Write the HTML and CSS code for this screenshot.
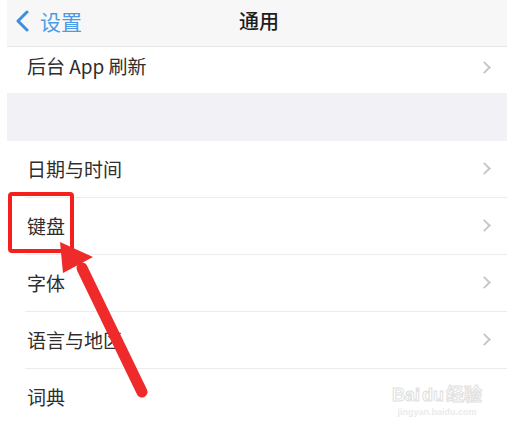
FILE: index.html
```html
<!DOCTYPE html>
<html>
<head>
  <meta charset="utf-8">
  <link rel="stylesheet" href="styles.css">
</head>
<body>
  <div class="screen">
    <div class="nav">
      <div class="back">
        <svg width="16" height="22" viewBox="0 0 16 22">
          <path d="M12 2 L3 11 L12 20" fill="none" stroke="#3d8ee0" stroke-width="3" stroke-linecap="round" stroke-linejoin="round"/>
        </svg>
        <span>设置</span>
      </div>
      <div class="title">通用</div>
    </div>

    <div class="group">
      <div class="row first">
        <span class="label">后台 App 刷新</span>
        <span class="chevron"></span>
      </div>
    </div>

    <div class="gap"></div>

    <div class="group">
      <div class="row"><span class="label">日期与时间</span><span class="chevron"></span></div>
      <div class="row"><span class="label">键盘</span><span class="chevron"></span></div>
      <div class="row"><span class="label">字体</span><span class="chevron"></span></div>
      <div class="row"><span class="label">语言与地区</span><span class="chevron"></span></div>
      <div class="row last"><span class="label">词典</span></div>
    </div>

    <div class="highlight"></div>

    <svg class="arrow" width="514" height="447" viewBox="0 0 514 447">
      <line x1="82" y1="268" x2="142" y2="392" stroke="#ee2a2a" stroke-width="11" stroke-linecap="round"/>
      <polygon points="60,242 63,273 93,257" fill="#ee2a2a"/>
    </svg>

    <div class="watermark">
      <div class="wm-logo">Bai<span class="paw">du</span>经验</div>
      <div class="wm-url">jingyan.baidu.com</div>
    </div>
  </div>
</body>
</html>
```

FILE: styles.css
```css
* {
  margin: 0;
  padding: 0;
  box-sizing: border-box;
}

body {
  background-color: #ffffff;
  font-family: "Noto Sans CJK SC", "Noto Sans", sans-serif;
  width: 514px;
  height: 447px;
  overflow: hidden;
}

.screen {
  margin: 0 7px;
  height: 447px;
  background-color: #ffffff;
}

.nav {
  height: 47px;
  background-color: #f7f7f8;
  border-bottom: 1px solid #e6e6e8;
  display: flex;
  align-items: center;
  justify-content: center;
  position: relative;
}

.back {
  position: absolute;
  left: 8px;
  top: 9px;
  display: flex;
  align-items: center;
  gap: 9px;
  color: #4b9be6;
  font-size: 21px;
  line-height: 24px;
}

.title {
  font-size: 20px;
  font-weight: 500;
  color: #1e1e1e;
  margin-left: 4px;
  margin-top: -6px;
}

.group {
  background-color: #ffffff;
}

.row {
  height: 57px;
  display: flex;
  align-items: center;
  justify-content: space-between;
  padding: 0 18px 3px 20px;
  position: relative;
}

.row::after {
  content: "";
  position: absolute;
  left: 18px;
  right: 0;
  bottom: 0;
  height: 1px;
  background-color: #ececee;
}

.row.first {
  height: 46px;
  align-items: flex-start;
  padding-top: 5px;
}

.row.first::after,
.row.last::after {
  display: none;
}

.label {
  font-size: 19px;
  color: #2e2e2e;
}

.chevron {
  width: 9px;
  height: 9px;
  border-top: 2px solid #c8c8cc;
  border-right: 2px solid #c8c8cc;
  transform: rotate(45deg);
}

.row.first .chevron {
  margin-top: 11px;
}

.gap {
  height: 48px;
  background-color: #f2f2f6;
}

.highlight {
  position: absolute;
  left: 8px;
  top: 192px;
  width: 66px;
  height: 61px;
  border: 4px solid #f5201d;
  border-radius: 4px;
}

.arrow {
  position: absolute;
  left: 0;
  top: 0;
  pointer-events: none;
}

.watermark {
  position: absolute;
  left: 392px;
  top: 385px;
  display: flex;
  flex-direction: column;
  align-items: center;
}

.wm-logo {
  font-family: "Liberation Sans", "Noto Sans CJK SC", sans-serif;
  font-size: 18px;
  font-weight: bold;
  line-height: 20px;
  color: #ffffff;
  -webkit-text-stroke: 1px #e0e0e0;
}

.paw {
  margin: 0 2px;
}

.wm-url {
  font-family: "Liberation Sans", sans-serif;
  font-size: 9px;
  font-weight: bold;
  color: #ebebeb;
  margin-top: 2px;
}
```
